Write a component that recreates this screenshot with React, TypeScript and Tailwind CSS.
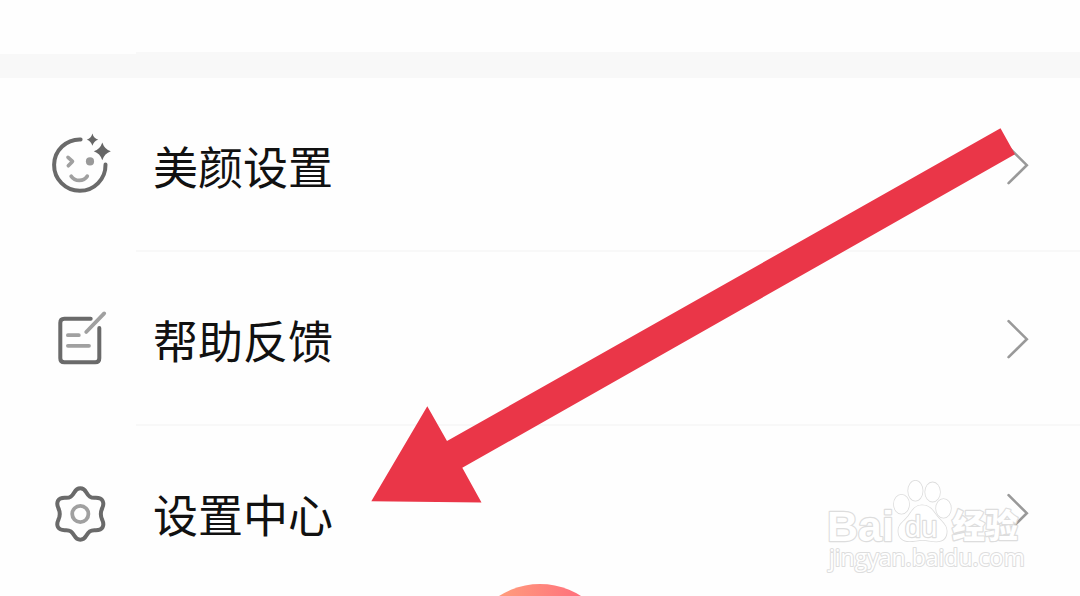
import type { ReactNode } from "react";

function FaceIcon() {
  return (
    <svg viewBox="0 0 60 60" className="size-[60px] shrink-0 overflow-visible" fill="none" strokeLinecap="round" strokeLinejoin="round" aria-hidden="true">
      <path d="M30.6 4.4A25.7 25.7 0 1 0 55.5 29.6" stroke="#6a6a6a" strokeWidth="4" />
      <path d="M18 22.3L22.5 26.4L18.3 30.8" stroke="#a0a0a0" strokeWidth="3.6" />
      <path d="M21.2 41.2C25 46.8 33.6 46.8 37.2 41.2" stroke="#a0a0a0" strokeWidth="3.8" />
      <circle cx="40" cy="26.4" r="4.1" fill="#999" />
      <path d="M42.4 -1.4Q43.7 3.5 48.2 4.7Q43.7 6 42.4 10.8Q41.1 6 36.8 4.7Q41.1 3.5 42.4 -1.4Z" fill="#666" />
      <path d="M52.3 7.4Q54.5 14.2 60.8 16.3Q54.5 18.5 52.3 25.2Q50.1 18.5 43.8 16.3Q50.1 14.2 52.3 7.4Z" fill="#666" />
    </svg>
  );
}

function NoteIcon() {
  return (
    <svg viewBox="0 0 60 60" className="size-[60px] shrink-0" fill="none" strokeLinecap="round" strokeLinejoin="round" aria-hidden="true">
      <path d="M40.7 9.7H14.3Q10.3 9.7 10.3 13.7V49.3Q10.3 53.3 14.3 53.3H45.3Q49.3 53.3 49.3 49.3V18.9" stroke="#6a6a6a" strokeWidth="4" />
      <path d="M54.2 4.4L36.2 23M17.9 26.2H28.8M17.9 36.8H39" stroke="#a0a0a0" strokeWidth="3.8" />
    </svg>
  );
}

function GearIcon() {
  return (
    <svg viewBox="0 0 60 60" className="size-[60px] shrink-0" fill="none" strokeLinejoin="round" aria-hidden="true">
      <path
        d="M30.3 5.3C27.5 5.3 25.8 6.7 24.4 9.2C22 13.3 20.2 15 15.6 14.8C11.5 14.6 9.4 15.2 8 17.8C6.6 20.5 7.2 22.6 8.3 25C10.4 29.3 10.4 32.7 8.3 37C7.2 39.4 6.6 41.5 8 44.2C9.4 46.8 11.5 47.4 15.6 47.2C20.2 47 22 48.7 24.4 52.8C25.8 55.3 27.5 56.7 30.3 56.7C33.1 56.7 34.8 55.3 36.2 52.8C38.6 48.7 40.4 47 45 47.2C49.1 47.4 51.2 46.8 52.6 44.2C54 41.5 53.4 39.4 52.3 37C50.2 32.7 50.2 29.3 52.3 25C53.4 22.6 54 20.5 52.6 17.8C51.2 15.2 49.1 14.6 45 14.8C40.4 15 38.6 13.3 36.2 9.2C34.8 6.7 33.1 5.3 30.3 5.3Z"
        stroke="#6a6a6a"
        strokeWidth="4"
      />
      <circle cx="30.3" cy="31" r="8.1" stroke="#a0a0a0" strokeWidth="3.8" />
    </svg>
  );
}

function Row({ icon, label, last = false }: { icon: ReactNode; label: string; last?: boolean }) {
  return (
    <li>
      <a href="#" className="flex h-[172px] items-center pt-[2px] pr-[51px] pl-[50px] text-[#111]">
        {icon}
        <span className="ml-[43px] flex-1 pt-[2px] text-[45px] leading-[60px]">{label}</span>
        <svg viewBox="0 0 22 40" className="h-10 w-[22px]" fill="none" stroke="#999" strokeWidth="2.6" strokeLinecap="round" aria-hidden="true">
          <path d="M1.6 2.2L19.8 20.2L1.6 38.2" />
        </svg>
      </a>
      {!last && <div className="ml-[136px] h-[2px] bg-[#f8f8f8]" />}
    </li>
  );
}

function Watermark() {
  return (
    <svg
      viewBox="0 0 200 100"
      className="absolute top-[476px] right-[55px] h-[100px] w-[200px]"
      fill="#fff"
      stroke="#ddd"
      strokeWidth="2.4"
      strokeLinejoin="round"
      paintOrder="stroke"
    >
      <text x="2" y="65" fontFamily="Liberation Sans" fontWeight="700" fontSize="43">Bai</text>
      <g strokeWidth="1.6">
        <ellipse cx="76.5" cy="28.2" rx="7.6" ry="9.5" />
        <ellipse cx="90.4" cy="14.8" rx="7.2" ry="10" />
        <ellipse cx="107.6" cy="16" rx="7.4" ry="9.6" />
        <ellipse cx="118.5" cy="32.4" rx="7.4" ry="9.4" />
        <path d="M97 29.3C90 29.3 87.3 34.5 83.5 40C78.8 46 73.4 48 73.4 55C73.4 61.6 77.8 65.3 84.5 65.3C89.5 65.3 92.5 64 97.5 64C102.5 64 106 65.5 111.2 65.5C118 65.5 121.7 61.5 121.7 55C121.7 48.5 115.5 45 111.4 39.5C107.8 34.5 104.5 29.3 97 29.3Z" />
      </g>
      <text x="80" y="61" fontFamily="Liberation Sans" fontSize="29" strokeWidth="2.4">du</text>
      <text x="127" y="62" fontFamily="Noto Sans CJK SC" fontWeight="900" fontSize="33">经验</text>
      <text x="4" y="90" fontFamily="Open Sans" fontSize="23" strokeWidth="2">jingyan.baidu.com</text>
    </svg>
  );
}

export default function App() {
  return (
    <main className="relative h-screen overflow-hidden bg-[#fefefe] font-['Noto_Sans_CJK_SC',sans-serif]">
      <div className="h-[52px]" />
      <div className="ml-[136px] h-[2px] bg-[#f8f8f8]" />
      <div className="h-6 bg-[#f8f8f8]" />
      <ul>
        <Row icon={<FaceIcon />} label="美颜设置" />
        <Row icon={<NoteIcon />} label="帮助反馈" />
        <Row icon={<GearIcon />} label="设置中心" last />
      </ul>
      <button
        type="button"
        aria-label="发布"
        className="absolute -bottom-[140px] left-1/2 size-[152px] -translate-x-1/2 rounded-full bg-linear-to-r from-[#ff9f7c] from-20% to-[#ff6c7c] to-80%"
      />
      <Watermark />
      <svg viewBox="371 128 645 375" className="absolute top-[128px] right-[64px] h-[375px] w-[645px]" aria-hidden="true">
        <path d="M1000.5 128.3L1015 154.3L462.3 467.8L481.5 502.5L371.3 501.2L427.3 406.3L447 441Z" fill="#ea3648" />
      </svg>
    </main>
  );
}
